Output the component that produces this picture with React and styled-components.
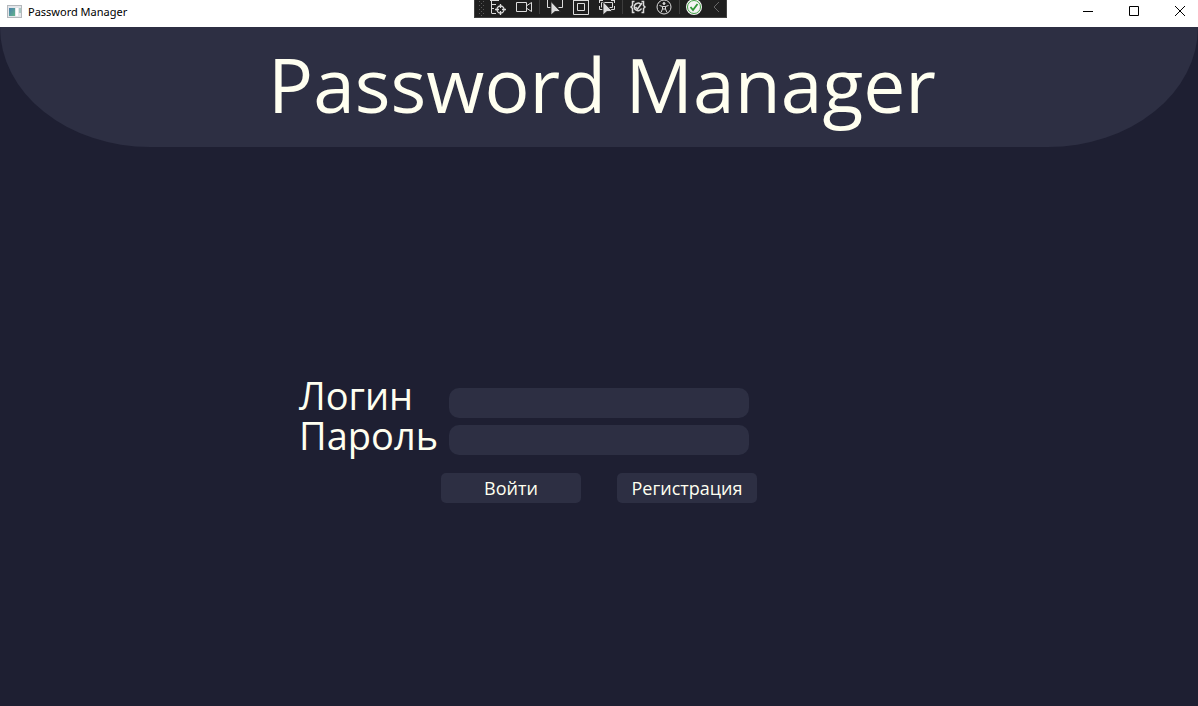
import React from "react";
import styled, { createGlobalStyle } from "styled-components";

const GlobalStyle = createGlobalStyle`
  *, *::before, *::after { box-sizing: border-box; }
  html, body, #root { height: 100%; }
  body {
    margin: 0;
    background: #1e1f32;
    color: #fffff0;
    font-family: "Segoe UI", "Open Sans", "Noto Sans", sans-serif;
  }
`;

const Window = styled.div`
  display: flex;
  flex-direction: column;
  min-height: 100%;
`;

const TitleBar = styled.header`
  position: relative;
  display: flex;
  align-items: flex-start;
  justify-content: space-between;
  height: 27px;
  background: #ffffff;
  color: #000000;
`;

const Caption = styled.div`
  display: flex;
  align-items: center;
  gap: 6px;
  height: 22px;
  padding-left: 7px;
  font-size: 11px;
  font-family: "Segoe UI", "Noto Sans", sans-serif;
`;

const WindowButtons = styled.div`
  display: flex;
  gap: 10px;
`;

const WindowButton = styled.button`
  display: flex;
  align-items: center;
  justify-content: center;
  width: 36px;
  height: 22px;
  padding: 0;
  border: 0;
  background: none;
  color: inherit;
`;

const DebugBar = styled.div`
  position: absolute;
  top: 0;
  left: calc(50% - 125px);
  display: flex;
  align-items: flex-start;
  width: 253px;
  height: 18px;
  padding-left: 4px;
  background: #1f1f1f;
  border: 1px solid #424242;
  border-top: 0;
`;

const ToolButton = styled.button`
  display: flex;
  flex: none;
  justify-content: center;
  width: ${(p) => p.$width || 26}px;
  height: 17px;
  padding: 0;
  border: 0;
  background: none;
  color: #dcdcdc;
`;

const Divider = styled.span`
  flex: none;
  width: 1px;
  height: 14px;
  margin: 0 2px;
  background: #3d3d3d;
`;

const Banner = styled.div`
  display: flex;
  justify-content: center;
  height: 120px;
  border-radius: 0 0 150px 150px / 0 0 120px 120px;
  background: #2d2f43;
`;

const Heading = styled.h1`
  margin: 0;
  padding-left: 6px;
  font-size: 75px;
  font-weight: 400;
  line-height: 114px;
  white-space: nowrap;
`;

const LoginForm = styled.form`
  display: flex;
  flex-direction: column;
  gap: 18px;
  width: 600px;
  max-width: 100%;
  margin: 228px auto 0;
`;

const Fields = styled.div`
  display: grid;
  grid-template-columns: 150px 300px;
`;

const Labels = styled.div`
  display: flex;
  flex-direction: column;
`;

const Label = styled.label`
  font-size: 38px;
  line-height: 40px;
  white-space: nowrap;
`;

const Inputs = styled.div`
  display: flex;
  flex-direction: column;
  gap: 7px;
  padding-top: 13px;
`;

const TextBox = styled.input`
  width: 100%;
  height: 30px;
  padding: 0 10px;
  border: 0;
  border-radius: 10px;
  background: #2d2f43;
  color: inherit;
  font: inherit;
  font-size: 18px;
`;

const Actions = styled.div`
  display: flex;
  justify-content: center;
  gap: 36px;
`;

const ActionButton = styled.button`
  width: 140px;
  height: 30px;
  padding: 0;
  border: 0;
  border-radius: 5px;
  background: #2d2f43;
  color: inherit;
  font: inherit;
  font-size: 18px;
  line-height: 30px;
`;

const AppIcon = () => (
  <svg width="15" height="13" viewBox="0 0 15 13" aria-hidden="true">
    <defs>
      <linearGradient id="pane" x1="0" y1="0" x2="1" y2="1">
        <stop offset="0" stopColor="#4a7fae" />
        <stop offset="1" stopColor="#62b58b" />
      </linearGradient>
    </defs>
    <rect x="0.5" y="0.5" width="14" height="12" fill="#e4e6ea" stroke="#b4b8bc" />
    <rect x="2" y="3" width="6" height="8" fill="url(#pane)" />
    <rect x="9" y="3" width="2" height="8" fill="#ffffff" />
    <rect x="12" y="3" width="2" height="5" fill="#a9c9c4" />
  </svg>
);

const Icon = ({ children }) => (
  <svg width="16" height="16" viewBox="0 0 16 16" fill="none" stroke="currentColor" aria-hidden="true">
    {children}
  </svg>
);

const Pointer = () => <path d="M4 1.500v13.500l4-3.500h5.500z" fill="currentColor" stroke="#1f1f1f" strokeWidth="0.8" />;

export default function App() {
  return (
    <Window>
      <GlobalStyle />
      <TitleBar>
        <Caption><AppIcon /><span>Password Manager</span></Caption>
        <DebugBar>
          <svg width="6" height="17" viewBox="0 0 6 17" fill="#5a5a5a" aria-hidden="true">
            {[1, 5, 9, 13].map((y) => (
              <g key={y}>
                <rect x="0" y={y} width="1" height="1" /><rect x="4" y={y} width="1" height="1" />
                <rect x="2" y={y + 2} width="1" height="1" />
              </g>
            ))}
          </svg>
          <ToolButton type="button" aria-label="Live Visual Tree">
            <Icon>
              <path d="M0 0.500h9M1.500 0v13.500M2 4.500h4M2 8.500h2M2 13.500h4" />
              <circle cx="10.500" cy="9.500" r="3.500" strokeWidth="1.300" />
              <path d="M10.500 4v4M10.500 11v4M5 9.500h4M12 9.500h4" strokeWidth="1.300" />
            </Icon>
          </ToolButton>
          <ToolButton type="button" aria-label="Record">
            <Icon><path d="M0.500 2.500h10v9h-10zM11 5.500l4.500-3v9l-4.500-3" /></Icon>
          </ToolButton>
          <Divider />
          <ToolButton type="button" aria-label="Select Element">
            <Icon><path d="M0.500 0v7.500h3M15.500 0v7.500h-4" /><Pointer /></Icon>
          </ToolButton>
          <ToolButton type="button" aria-label="Display Layout Adorners">
            <Icon><path d="M0.500 0v14.500h15V0M0.500 0.500h15M4.500 3.500h7v7h-7z" /></Icon>
          </ToolButton>
          <ToolButton type="button" aria-label="Track Focused Element">
            <Icon><path d="M0 0.500h4M12 0.500h4M0.500 0v3M15.500 0v3M0.500 6v3.500h3M15.500 6v3.500h-4M2.500 7.500V2.500h11v5h-3" /><Pointer /></Icon>
          </ToolButton>
          <Divider />
          <ToolButton type="button" aria-label="Binding Failures">
            <Icon>
              <path d="M4.500 1.500H2.500v4L1 7l1.500 1.500v4h2M11.500 1.500h2v4L15 7l-1.500 1.500v4h-2" strokeWidth="1.500" />
              <path d="M10.500 4a3.800 3.800 0 1 0 1 4.500M5.500 7l2 2L12 3" strokeWidth="1.500" />
            </Icon>
          </ToolButton>
          <ToolButton type="button" aria-label="Scan for Accessibility Issues">
            <Icon>
              <circle cx="8" cy="7" r="7" />
              <circle cx="8" cy="3.500" r="1" fill="currentColor" />
              <path d="M3.500 5.500l3 1h3l3-1M6.500 6.500v2.500l-1.500 3.500M9.500 6.500v2.500l1.500 3.500M6.500 9h3" />
            </Icon>
          </ToolButton>
          <Divider />
          <ToolButton type="button" aria-label="Hot Reload" $width={24}>
            <Icon>
              <circle cx="8" cy="7" r="8" fill="#f4f4f4" stroke="none" />
              <circle cx="8" cy="7" r="6.500" stroke="#42a045" />
              <path d="M4.500 7l2.500 3 4.500-6" stroke="#2f9636" strokeWidth="1.800" />
            </Icon>
          </ToolButton>
          <ToolButton type="button" aria-label="Collapse toolbar" $width={20}>
            <Icon><path d="M11 2l-5 5 5 5" stroke="#666666" /></Icon>
          </ToolButton>
        </DebugBar>
        <WindowButtons>
          <WindowButton type="button" aria-label="Minimize">
            <svg width="10" height="10" viewBox="0 0 10 10" fill="currentColor"><path d="M0 5h10v1H0z" /></svg>
          </WindowButton>
          <WindowButton type="button" aria-label="Maximize">
            <svg width="10" height="10" viewBox="0 0 10 10" fill="none" stroke="currentColor"><path d="M.5.5h9v9h-9z" /></svg>
          </WindowButton>
          <WindowButton type="button" aria-label="Close">
            <svg width="10" height="10" viewBox="0 0 10 10" fill="none" stroke="currentColor"><path d="M0 0l10 10M10 0L0 10" /></svg>
          </WindowButton>
        </WindowButtons>
      </TitleBar>
      <main>
        <Banner><Heading>Password Manager</Heading></Banner>
        <LoginForm onSubmit={(e) => e.preventDefault()}>
          <Fields>
            <Labels>
              <Label htmlFor="login">Логин</Label>
              <Label htmlFor="password">Пароль</Label>
            </Labels>
            <Inputs>
              <TextBox id="login" type="text" />
              <TextBox id="password" type="password" />
            </Inputs>
          </Fields>
          <Actions>
            <ActionButton type="submit">Войти</ActionButton>
            <ActionButton type="button">Регистрация</ActionButton>
          </Actions>
        </LoginForm>
      </main>
    </Window>
  );
}
